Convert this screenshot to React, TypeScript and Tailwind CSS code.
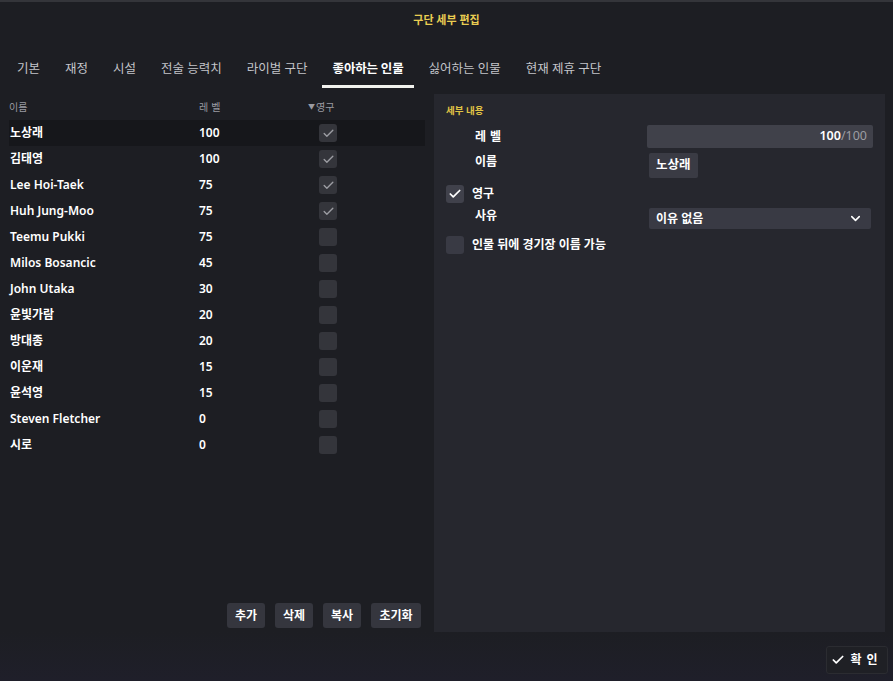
import { Check, ChevronDown } from "lucide-react";

const tabs = ["기본", "재정", "시설", "전술 능력치", "라이벌 구단", "좋아하는 인물", "싫어하는 인물", "현재 제휴 구단"];

const people: { name: string; level: number; perm: boolean }[] = [
  { name: "노상래", level: 100, perm: true },
  { name: "김태영", level: 100, perm: true },
  { name: "Lee Hoi-Taek", level: 75, perm: true },
  { name: "Huh Jung-Moo", level: 75, perm: true },
  { name: "Teemu Pukki", level: 75, perm: false },
  { name: "Milos Bosancic", level: 45, perm: false },
  { name: "John Utaka", level: 30, perm: false },
  { name: "윤빛가람", level: 20, perm: false },
  { name: "방대종", level: 20, perm: false },
  { name: "이운재", level: 15, perm: false },
  { name: "윤석영", level: 15, perm: false },
  { name: "Steven Fletcher", level: 0, perm: false },
  { name: "시로", level: 0, perm: false },
];

export default function App() {
  return (
    <div className="w-[893px] h-[681px] overflow-hidden bg-[#1d1e23] border-t-2 border-[#34353a] flex flex-col text-white font-['Noto_Sans','Noto_Sans_CJK_KR',sans-serif]">
      {/* Title */}
      <div className="h-[36px] flex items-center justify-center text-[11px] font-semibold text-[#e9cd52]">
        구단 세부 편집
      </div>

      {/* Tabs */}
      <div className="h-[50px] flex items-end pl-[17px] gap-[25px]">
        {tabs.map((t) => {
          const active = t === "좋아하는 인물";
          return (
            <div key={t} className="flex flex-col">
              <div
                className={`pb-[6px] text-[12.5px] whitespace-nowrap ${
                  active ? "text-white font-semibold tracking-[-0.2px]" : "text-[#c4c5ca]"
                }`}
              >
                {t}
              </div>
              <div className={`h-[3px] self-stretch ${active ? "-mx-[11px] bg-[#f2f2ee]" : "bg-transparent"}`} />
            </div>
          );
        })}
      </div>

      {/* Main */}
      <div className="flex mt-[6px] pl-[9px] gap-[9px] h-[538px]">
        {/* Left list */}
        <div className="w-[416px] flex flex-col">
          <div className="h-[26px] flex items-center text-[10px] text-[#9a9ba2]">
            <div className="w-[190px]">이름</div>
            <div className="w-[109px] tracking-[3px]">레벨</div>
            <div className="flex items-center gap-[1px]">
              <span className="text-[7px]">▼</span>영구
            </div>
          </div>
          {people.map((p, i) => (
            <div
              key={p.name}
              className={`h-[26px] flex items-center text-[12px] font-semibold ${i === 0 ? "bg-[#16171b]" : ""}`}
            >
              <div className="w-[190px] pl-[1px]">{p.name}</div>
              <div className="w-[120px]">{p.level}</div>
              <div className="w-[18px] h-[18px] rounded-[3px] bg-[#34353b] flex items-center justify-center">
                {p.perm && <Check size={13} strokeWidth={2.5} className="text-[#9c9da3]" />}
              </div>
            </div>
          ))}
          <div className="flex-1" />
          <div className="flex justify-end gap-[10px] pr-[4px] pb-[4px] text-[12px] font-semibold">
            <button className="h-[25px] w-[38px] rounded-[3px] bg-[#35363e]">추가</button>
            <button className="h-[25px] w-[38px] rounded-[3px] bg-[#35363e]">삭제</button>
            <button className="h-[25px] w-[38px] rounded-[3px] bg-[#35363e]">복사</button>
            <button className="h-[25px] w-[50px] rounded-[3px] bg-[#35363e]">초기화</button>
          </div>
        </div>

        {/* Right detail panel */}
        <div className="w-[451px] bg-[#26272e] flex flex-col pl-[12px] pr-[12px]">
          <div className="mt-[10px] text-[9.5px] font-semibold text-[#e0c445]">세부 내용</div>
          <div className="flex items-center mt-[7px] h-[23px]">
            <div className="w-[201px] pl-[29px] text-[12px] font-semibold tracking-[4px]">레벨</div>
            <div className="w-[226px] h-[23px] rounded-[2px] bg-[#40414a] flex items-center justify-end pr-[6px] text-[12.5px]">
              <span className="font-semibold">100</span>
              <span className="text-[#9c9da3]">/100</span>
            </div>
          </div>
          <div className="flex mt-[5px] h-[25px]">
            <div className="w-[203px] pl-[29px] pt-[2px] text-[12px] font-semibold leading-[14px]">이름</div>
            <div className="h-[25px] px-[7px] rounded-[2px] bg-[#3a3b44] flex items-center text-[12.5px] font-semibold">
              노상래
            </div>
          </div>
          <div className="flex items-center mt-[7px] h-[18px]">
            <div className="w-[18px] h-[18px] rounded-[3px] bg-[#40414b] flex items-center justify-center">
              <Check size={14} strokeWidth={3} className="text-white" />
            </div>
            <div className="ml-[8px] text-[12px] font-semibold">영구</div>
          </div>
          <div className="flex mt-[5px] h-[21px]">
            <div className="w-[203px] pl-[29px] pt-[1px] text-[12px] font-semibold leading-[14px]">사유</div>
            <div className="w-[222px] h-[21px] rounded-[2px] bg-[#393a44] flex items-center justify-between pl-[7px] pr-[8px] text-[12px] font-semibold">
              이유 없음
              <ChevronDown size={15} strokeWidth={2.5} className="text-white" />
            </div>
          </div>
          <div className="flex items-center mt-[7px] h-[18px]">
            <div className="w-[18px] h-[18px] rounded-[3px] bg-[#393a44]" />
            <div className="ml-[8px] text-[12px] font-semibold">인물 뒤에 경기장 이름 가능</div>
          </div>
        </div>
      </div>

      {/* Footer */}
      <div className="flex-1 flex justify-end items-start pt-[14px] pr-[5px] bg-gradient-to-t from-[#1f1f2a] to-[#1d1e23]">
        <button className="h-[28px] w-[62px] rounded-[3px] bg-[#1f2025] border border-[#2b2c31] flex items-center justify-center gap-[5px] text-[12px] font-semibold">
          <Check size={14} strokeWidth={3} className="text-white" />
          <span className="tracking-[5px]">확인</span>
        </button>
      </div>
    </div>
  );
}
